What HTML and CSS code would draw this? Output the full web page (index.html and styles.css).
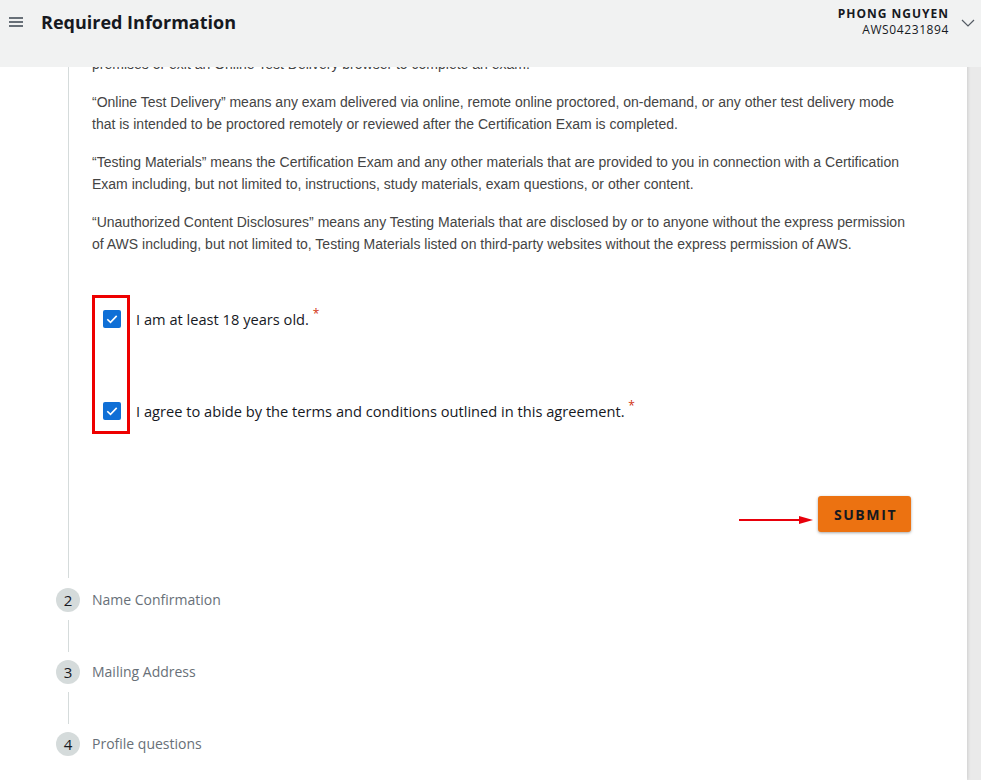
FILE: index.html
```html
<!DOCTYPE html>
<html lang="en">
<head>
<meta charset="utf-8">
<title>Required Information</title>
<link rel="stylesheet" href="styles.css">
</head>
<body>
<header class="topbar">
  <div class="topbar-left">
    <button class="menu-btn" aria-label="Menu">
      <svg width="14" height="10" viewBox="0 0 14 10"><rect x="0" y="0" width="14" height="2" fill="#687078"/><rect x="0" y="4" width="14" height="2" fill="#687078"/><rect x="0" y="8" width="14" height="2" fill="#687078"/></svg>
    </button>
    <h1 class="title">Required Information</h1>
  </div>
  <div class="user">
    <div class="user-text">
      <div class="user-name">PHONG NGUYEN</div>
      <div class="user-id">AWS04231894</div>
    </div>
    <svg class="chev" width="14" height="8" viewBox="0 0 14 8"><path d="M1 1 L7 7 L13 1" fill="none" stroke="#545b64" stroke-width="1.2"/></svg>
  </div>
</header>

<main class="page">
  <div class="stepper">
    <section class="step step-open">
      <div class="rail"><span class="line line-first"></span></div>
      <div class="step-body">
        <p class="para">premises or exit an Online Test Delivery browser to complete an exam.</p>
        <p class="para">“Online Test Delivery” means any exam delivered via online, remote online proctored, on-demand, or any other test delivery mode that is intended to be proctored remotely or reviewed after the Certification Exam is completed.</p>
        <p class="para">“Testing Materials” means the Certification Exam and any other materials that are provided to you in connection with a Certification Exam including, but not limited to, instructions, study materials, exam questions, or other content.</p>
        <p class="para">“Unauthorized Content Disclosures” means any Testing Materials that are disclosed by or to anyone without the express permission of AWS including, but not limited to, Testing Materials listed on third-party websites without the express permission of AWS.</p>

        <div class="agreements">
          <span class="highlight-box"></span>
          <label class="check-row">
            <span class="checkbox"><svg width="18" height="18" viewBox="0 0 18 18"><path d="M4.3 9.2 L7.5 12.3 L13.7 5.9" fill="none" stroke="#fff" stroke-width="1.6"/></svg></span>
            <span class="check-label">I am at least 18 years old. <sup class="req">*</sup></span>
          </label>
          <label class="check-row">
            <span class="checkbox"><svg width="18" height="18" viewBox="0 0 18 18"><path d="M4.3 9.2 L7.5 12.3 L13.7 5.9" fill="none" stroke="#fff" stroke-width="1.6"/></svg></span>
            <span class="check-label">I agree to abide by the terms and conditions outlined in this agreement. <sup class="req">*</sup></span>
          </label>
        </div>

        <div class="actions">
          <svg class="arrow" width="74" height="10" viewBox="0 0 74 10"><line x1="0" y1="5" x2="62" y2="5" stroke="#e8000b" stroke-width="2"/><path d="M60 1 L74 5 L60 9 Z" fill="#e8000b"/></svg>
          <button class="submit">SUBMIT</button>
        </div>
      </div>
    </section>

    <section class="step">
      <div class="rail"><span class="num">2</span><span class="line"></span></div>
      <div class="step-title">Name Confirmation</div>
    </section>
    <section class="step">
      <div class="rail"><span class="num">3</span><span class="line"></span></div>
      <div class="step-title">Mailing Address</div>
    </section>
    <section class="step">
      <div class="rail"><span class="num">4</span></div>
      <div class="step-title">Profile questions</div>
    </section>
  </div>
</main>
</body>
</html>
```
FILE: styles.css
```css
* { box-sizing: border-box; }
html, body { margin: 0; padding: 0; }
body {
  background: #eaeaea;
  font-family: "Open Sans", "Noto Sans", sans-serif;
  color: #16191f;
  height: 780px;
  overflow: hidden;
}

.topbar {
  position: fixed;
  top: 0; left: 0; right: 0;
  height: 67px;
  background: #f1f2f2;
  display: flex;
  justify-content: space-between;
  align-items: flex-start;
  z-index: 10;
}
.topbar-left {
  display: flex;
  align-items: center;
  height: 43px;
}
.menu-btn {
  border: 0;
  background: none;
  padding: 0;
  margin: 0 0 0 9px;
  width: 14px;
  height: 10px;
  display: flex;
}
.title {
  margin: 0 0 0 18px;
  font-size: 18px;
  font-weight: 700;
  color: #16191f;
  line-height: 24px;
}
.user {
  display: flex;
  align-items: flex-start;
  padding-top: 5px;
}
.user-text {
  text-align: right;
}
.user-name {
  font-size: 12px;
  font-weight: 700;
  letter-spacing: 1px;
  line-height: 17px;
}
.user-id {
  font-size: 12px;
  letter-spacing: 0.6px;
  line-height: 16px;
  color: #16191f;
}
.chev {
  margin: 14px 6px 0 12px;
}

.page {
  width: 967px;
  height: 780px;
  background: #fff;
  box-shadow: 1px 0 3px rgba(0,0,0,0.12);
}
.stepper {
  padding-left: 56px;
}
.step {
  display: grid;
  grid-template-columns: 24px 1fr;
  column-gap: 12px;
}
.rail {
  display: flex;
  flex-direction: column;
  align-items: center;
}
.line {
  width: 1px;
  background: #d5dbdb;
  height: 32px;
  margin: 8px 0;
}
.line-first {
  height: auto;
  flex: 1;
  margin: 0 0 10px;
}
.num {
  width: 24px;
  height: 24px;
  border-radius: 50%;
  background: #d5dbdb;
  color: #16191f;
  font-size: 15px;
  line-height: 24px;
  text-align: center;
}
.step-title {
  font-size: 14px;
  line-height: 24px;
  color: #687078;
}

.step-body {
  padding: 53px 0 56px;
  width: 819px;
}
.para {
  font-family: "Liberation Sans", Arial, sans-serif;
  font-size: 14px;
  line-height: 22px;
  color: #444;
  margin: 0 0 16px;
}
.para:last-of-type { margin-bottom: 0; }

.agreements {
  position: relative;
  margin-top: 40px;
  padding: 15px 0 14px 11px;
  display: flex;
  flex-direction: column;
  gap: 74px;
}
.highlight-box {
  position: absolute;
  left: 0; top: 0;
  width: 38px;
  height: 139px;
  border: 3px solid #ee0000;
}
.check-row {
  display: flex;
  align-items: center;
  height: 18px;
}
.checkbox {
  width: 18px;
  height: 18px;
  border-radius: 2px;
  background: #0f6fd6;
  display: flex;
}
.check-label {
  margin-left: 15px;
  font-size: 14.65px;
  line-height: 20px;
  color: #16191f;
}
.req {
  color: #d13212;
  font-size: 12px;
  line-height: 0;
  vertical-align: 7px;
}

.actions {
  position: relative;
  margin-top: 62px;
  display: flex;
  justify-content: flex-end;
}
.arrow {
  position: absolute;
  right: 98px;
  top: 19px;
}
.submit {
  width: 93px;
  height: 36px;
  border: 0;
  border-radius: 3px;
  background: #ec7211;
  color: #16191f;
  font-family: "Open Sans", sans-serif;
  font-weight: 700;
  font-size: 14px;
  letter-spacing: 1.6px;
  padding: 0 0 0 2px;
  box-shadow: 0 1px 3px rgba(0,0,0,0.35);
}
```
